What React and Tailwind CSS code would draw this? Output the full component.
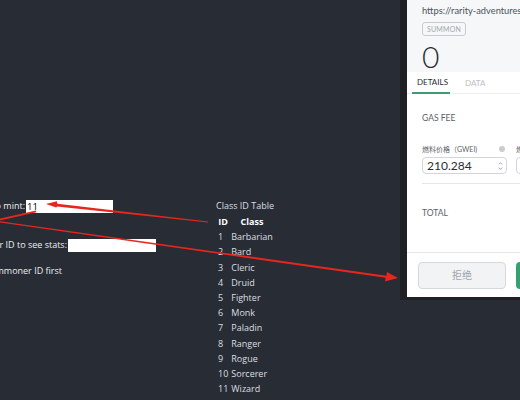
import React from "react";

const classes = [
  "Barbarian",
  "Bard",
  "Cleric",
  "Druid",
  "Fighter",
  "Monk",
  "Paladin",
  "Ranger",
  "Rogue",
  "Sorcerer",
  "Wizard",
];

function Arrows() {
  return (
    <svg
      className="absolute inset-0 pointer-events-none"
      width="520"
      height="400"
      viewBox="0 0 520 400"
    >
      {/* arrow from table to the mint input */}
      <polygon
        points="208,221.6 208,222.6 57,206.6 56.3,207.6 46,204 56.8,201.2 57.4,203.8"
        fill="#e8261d"
      />
      {/* small stroke near mint label */}
      <polygon points="0,218.4 36,210.6 36.4,212.2 0,220.6" fill="#e8261d" />
      {/* arrow from left to the wallet popup */}
      <polygon
        points="0,221.2 0,222.4 385.6,277.8 385,281.6 398,278 387,272 386.4,275.8"
        fill="#e8261d"
      />
    </svg>
  );
}

function Popup() {
  return (
    <div className="absolute left-[400px] top-0 bg-[#1e2024] pl-[7px] pb-[3px]">
      <div
        className="w-[360px] h-[297px] bg-white flex flex-col"
        style={{ fontFamily: "Lato, 'Noto Sans CJK SC', sans-serif" }}
      >
        {/* header */}
        <div className="bg-[#f6f7f8] h-[72px] pl-[15px] pt-[5px] flex flex-col items-start">
          <div className="text-[9.3px] leading-[12px] text-[#4b5259]">
            https://rarity-adventures.vercel.app
          </div>
          <div className="mt-[5px] h-[14px] w-[44px] border border-[#c8ccd0] rounded-[3px] flex items-center justify-center text-[7px] tracking-[0.2px] text-[#a2a8ae]">
            SUMMON
          </div>
          <div className="mt-[6px] text-[30px] leading-[28px] font-light text-[#2a2d31]">
            0
          </div>
        </div>

        {/* tabs */}
        <div className="h-[22px] flex items-stretch border-b border-[#eceef0] pl-[5px]">
          <div className="w-[38px] flex items-center justify-center border-b-2 border-[#3d9b76] text-[8px] text-[#2a2d31] -mb-px pl-[3px]">
            DETAILS
          </div>
          <div className="ml-[15px] flex items-center text-[8px] text-[#bbc0c5]">
            DATA
          </div>
        </div>

        {/* details */}
        <div className="flex-1 pl-[15px]">
          <div className="mt-[19px] text-[8.5px] leading-[10px] text-[#5b6167]">
            GAS FEE
          </div>
          <div className="mt-[21px] flex gap-[9px]">
            <div className="w-[85px] flex flex-col">
              <div className="flex items-center justify-between h-[10px]">
                <span className="text-[7px] text-[#5b6167]">燃料价格（GWEI)</span>
                <span className="w-[6px] h-[6px] rounded-full bg-[#c9cdd1] mr-[2px]" />
              </div>
              <div className="mt-[3px] h-[17px] border border-[#d2d6da] rounded-[4px] flex items-center justify-between pl-[4px] pr-[3px]">
                <span className="text-[12px] text-[#2a2d31]">210.284</span>
                <svg width="5" height="10" viewBox="0 0 5 10" fill="none" stroke="#8a9096" strokeWidth="0.8">
                  <path d="M0.8 3.4 L2.5 1.6 L4.2 3.4" />
                  <path d="M0.8 6.6 L2.5 8.4 L4.2 6.6" />
                </svg>
              </div>
            </div>
            <div className="w-[85px] flex flex-col">
              <div className="h-[10px] flex items-center">
                <span className="text-[7px] text-[#5b6167]">燃料限制</span>
              </div>
              <div className="mt-[3px] h-[17px] border border-[#d2d6da] rounded-[4px]" />
            </div>
          </div>
          <div className="mt-[9px] border-t border-[#e4e7ea]" />
          <div className="mt-[24px] text-[8.5px] leading-[10px] text-[#5b6167]">
            TOTAL
          </div>
        </div>

        {/* footer */}
        <div className="h-[45px] border-t border-[#e4e7ea] flex gap-[10px] pl-[11px] pt-[9px]">
          <div className="w-[88px] h-[27px] bg-[#f2f3f4] border border-[#d6d9dc] rounded-[4px] flex items-center justify-center text-[10px] text-[#9fa6ae]">
            拒绝
          </div>
          <div className="w-[88px] h-[27px] bg-[#35a070] rounded-[4px] flex items-center justify-center text-[10px] text-white">
            确认
          </div>
        </div>
      </div>
    </div>
  );
}

export default function App() {
  return (
    <div
      className="relative w-[520px] h-[400px] overflow-hidden bg-[#282c34] text-[#eceef0]"
      style={{ fontFamily: "'Open Sans', 'Noto Sans', sans-serif" }}
    >
      <div className="flex pt-[199px]">
        {/* form column, cut off on the left */}
        <div className="w-[216px] shrink-0 flex flex-col items-end pr-[60px] text-[9px]">
          <div className="w-[300px] flex items-center justify-end h-[14px]">
            <span className="whitespace-nowrap">Enter class ID to mint:</span>
            <div className="ml-px w-[87px] h-[13px] bg-white text-black text-[9.5px] leading-[13px] pl-[1px] mr-[43px]">
              11
            </div>
          </div>
          <div className="w-[300px] mt-[25px] flex items-center justify-end h-[14px]">
            <span className="whitespace-nowrap">Enter summoner ID to see stats:</span>
            <div className="ml-px w-[88px] h-[13px] bg-white" />
          </div>
          <div className="w-[300px] mt-[12px] flex justify-end h-[14px] pr-[94px]">
            <span className="whitespace-nowrap">Please enter summoner ID first</span>
          </div>
        </div>

        {/* class table */}
        <div className="flex flex-col text-[9px] text-[#dcdfe3]">
          <div className="leading-[15px] -mt-[1px] mb-[1px]">Class ID Table</div>
          <table className="border-separate border-spacing-x-[1px] border-spacing-y-0">
            <thead>
              <tr>
                <th className="font-bold text-center leading-[15.2px] text-white px-[1px]">ID</th>
                <th className="font-bold text-center leading-[15.2px] text-white px-[1px]">Class</th>
              </tr>
            </thead>
            <tbody>
              {classes.map((c, i) => (
                <tr key={c}>
                  <td className="text-left leading-[15.2px] py-0 px-[1px]">{i + 1}</td>
                  <td className="text-left leading-[15.2px] py-0 px-[1px]">{c}</td>
                </tr>
              ))}
            </tbody>
          </table>
        </div>
      </div>

      <Popup />
      <Arrows />
    </div>
  );
}
